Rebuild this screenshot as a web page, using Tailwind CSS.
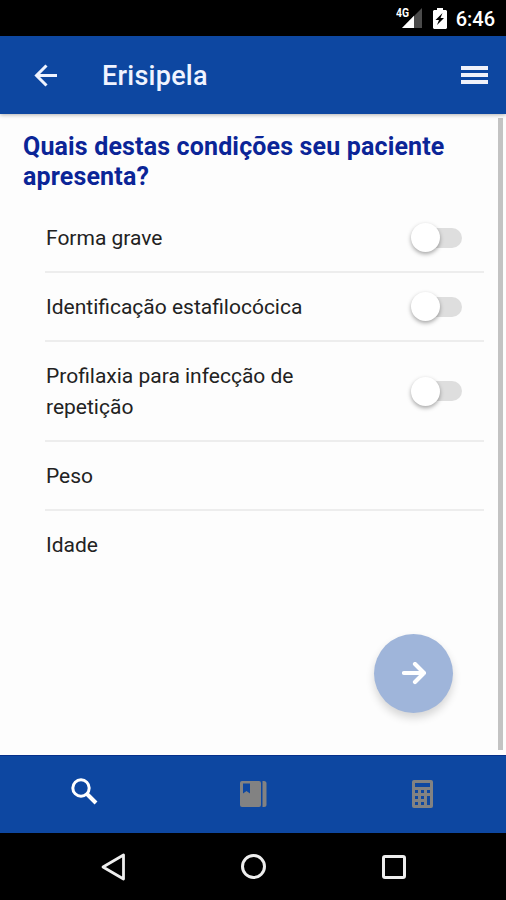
<!DOCTYPE html>
<html lang="pt-BR">
<head>
  <meta charset="UTF-8" />
  <meta name="viewport" content="width=device-width, initial-scale=1" />
  <title>Erisipela</title>
  <script src="https://cdn.jsdelivr.net/npm/@tailwindcss/browser@4"></script>
</head>
<body class="h-[900px] w-[506px] overflow-hidden bg-[#fdfdfd] font-['Roboto',sans-serif] flex flex-col">

  <!-- Status bar -->
  <div class="h-9 shrink-0 bg-black text-white flex items-center justify-end pr-[11px]">
    <svg class="w-[27px] h-7 mr-[10px]" viewBox="0 0 27 28" aria-hidden="true">
      <path d="M26 4v20H6z" fill="#4b4b4b" />
      <path d="M18 11.800v12.200H6z" fill="#fff" />
      <path d="M0 0h14v14H0z" fill="#000" />
      <text x="0" y="13" font-size="13" font-weight="700" fill="#fff" textLength="13" lengthAdjust="spacingAndGlyphs">4G</text>
    </svg>
    <svg class="w-[14px] h-[21px] mr-[9px]" viewBox="0 0 14 21" aria-hidden="true">
      <path d="M4 0h6v2h3l1 1v17l-1 1H1l-1-1V3l1-1h3z" fill="#fff" />
      <path d="m9.500 5-7 7h3.500l-2 5 7-7H7.500z" fill="#000" />
    </svg>
    <span class="text-[20px] leading-9 font-medium pt-0.5">6:46</span>
  </div>

  <!-- Header -->
  <header class="h-[78px] shrink-0 bg-[#0d47a1] text-white flex items-center pl-[34px] pr-[18px] shadow-[0_1px_4px_rgba(0,0,0,0.3)] z-10">
    <svg class="w-[23px] h-[23px]" viewBox="0 0 23 23" fill="none" stroke="#eef3ff" stroke-width="3" aria-hidden="true">
      <path d="M23 11.500H2M12.500 1.500l-10 10 10 10" />
    </svg>
    <h1 class="ml-[45px] pt-0.5 text-[27px] font-medium tracking-[0.25px] text-[#f0f4ff]">Erisipela</h1>
    <div class="ml-auto w-[27px] flex flex-col gap-[3px]">
      <span class="h-1 bg-[#f0f2fa]"></span>
      <span class="h-1 bg-[#f0f2fa]"></span>
      <span class="h-1 bg-[#f0f2fa]"></span>
    </div>
  </header>

  <!-- Conditions -->
  <main class="relative h-[641px] shrink-0 pt-[18px] pl-[23px] pr-[22px]">
    <h2 class="text-[25px] leading-[30px] font-bold tracking-[0.15px] text-[#0b2597]">Quais destas condições seu paciente<br />apresenta?</h2>

    <ul class="mt-3 ml-[22px] text-[21px] leading-[31px] text-[#222]">
      <li class="h-[69px] flex items-center justify-between border-b-2 border-[#ededed] pr-[22px] pl-px">
        <span class="pt-0.5">Forma grave</span>
        <span class="w-[51px] h-[29px] flex items-center">
          <span class="size-[29px] rounded-full bg-white shadow-[0_2px_4px_rgba(0,0,0,0.35)] z-10"></span>
          <span class="w-9 h-5 -ml-[14px] rounded-full bg-[#dedede]"></span>
        </span>
      </li>
      <li class="h-[69px] flex items-center justify-between border-b-2 border-[#ededed] pr-[22px] pl-px">
        <span class="pt-0.5">Identificação estafilocócica</span>
        <span class="w-[51px] h-[29px] flex items-center">
          <span class="size-[29px] rounded-full bg-white shadow-[0_2px_4px_rgba(0,0,0,0.35)] z-10"></span>
          <span class="w-9 h-5 -ml-[14px] rounded-full bg-[#dedede]"></span>
        </span>
      </li>
      <li class="h-[100px] flex items-center justify-between border-b-2 border-[#ededed] pr-[22px] pl-px">
        <span class="pt-0.5">Profilaxia para infecção de<br />repetição</span>
        <span class="w-[51px] h-[29px] flex items-center">
          <span class="size-[29px] rounded-full bg-white shadow-[0_2px_4px_rgba(0,0,0,0.35)] z-10"></span>
          <span class="w-9 h-5 -ml-[14px] rounded-full bg-[#dedede]"></span>
        </span>
      </li>
      <li class="h-[69px] flex items-center border-b-2 border-[#ededed] pl-px pt-0.5">Peso</li>
      <li class="h-[69px] flex items-center pl-px">Idade</li>
    </ul>

    <button aria-label="Avançar" class="absolute right-[53px] bottom-[42px] size-[79px] rounded-full bg-[#9fb5da] shadow-[0_5px_9px_rgba(0,0,0,0.16)] flex items-center justify-center">
      <svg class="w-6 h-6" viewBox="0 0 24 24" fill="none" stroke="#fff" stroke-width="4.200" stroke-linecap="round" stroke-linejoin="round" aria-hidden="true">
        <path d="M2 11h20M13 2l9 9-9 9" />
      </svg>
    </button>

    <!-- Scrollbar -->
    <div class="absolute top-1 right-[3px] bottom-[5px] w-[5px] bg-[#c3c3c3]"></div>
  </main>

  <!-- Tabs -->
  <nav class="h-[78px] shrink-0 bg-[#0d47a1] border-t border-[#06308a] grid grid-cols-3 items-center justify-items-center">
    <svg class="w-[27px] h-[27px] mb-[7px]" viewBox="0 0 27 27" fill="none" stroke="#fff" aria-hidden="true">
      <circle cx="10" cy="10" r="8.200" stroke-width="3" />
      <path d="m16 16 9 9" stroke-width="4" />
    </svg>
    <svg class="w-[27px] h-[27px] ml-px" viewBox="0 0 27 27" fill="#828282" aria-hidden="true">
      <path fill-rule="evenodd" d="M2 0h17q2 0 2 2v22q0 2-2 2H2q-2 0-2-2V2q0-2 2-2zM3 2.500v10l3.500-2.500 3.500 2.500v-10z" />
      <path d="M22.500 0H24q2.500 0 2.500 2.500v21Q26.500 26 24 26h-1.500z" />
    </svg>
    <svg class="w-[21px] h-[28px] mb-[2px] ml-0.5" viewBox="0 0 21 28" aria-hidden="true">
      <rect width="21" height="28" rx="2" fill="#828282" />
      <path fill="#0d47a1" d="M3 3h15v4H3zM3 10h3v3H3zM9 10h3v3H9zM15 10h3v3h-3zM3 16h3v3H3zM9 16h3v3H9zM15 16h3v9h-3zM3 22h3v3H3zM9 22h3v3H9z" />
    </svg>
  </nav>

  <!-- System navigation -->
  <div class="h-[67px] shrink-0 bg-black flex items-center justify-between pl-[101px] pr-[100px]">
    <svg class="w-6 h-7" viewBox="0 0 24 28" fill="none" stroke="#eee" stroke-width="2.800" stroke-linejoin="round" aria-hidden="true">
      <path d="M22.500 2v24L2 14z" />
    </svg>
    <span class="size-[25px] rounded-full border-3 border-[#eee]"></span>
    <span class="size-6 rounded-[3px] border-3 border-[#eee]"></span>
  </div>
</body>
</html>
